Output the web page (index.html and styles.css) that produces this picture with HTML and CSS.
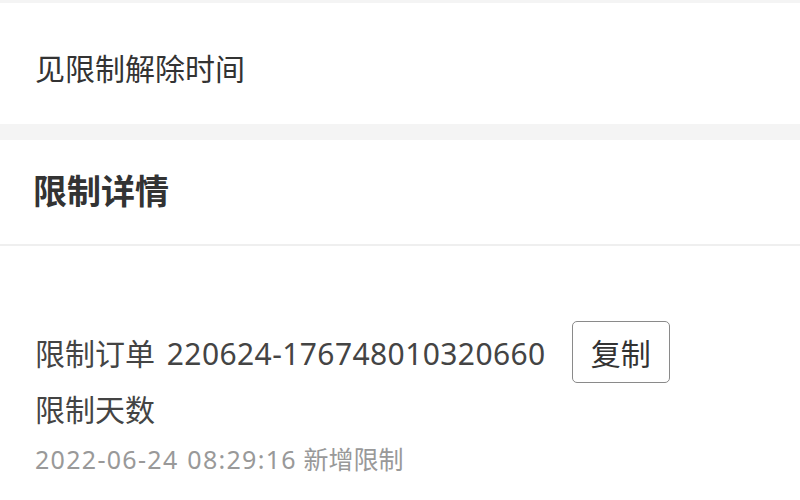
FILE: index.html
```html
<!DOCTYPE html>
<html lang="zh-CN">
<head>
    <meta charset="UTF-8">
    <meta name="viewport" content="width=device-width, initial-scale=1.0">
    <title>限制详情</title>
    <link rel="stylesheet" href="styles.css">
</head>
<body>
    <div class="card notice">
        <p>见限制解除时间</p>
    </div>

    <div class="card detail">
        <div class="detail-head">
            <h2>限制详情</h2>
        </div>
        <div class="detail-body">
            <div class="order-row">
                <span class="order-text">限制订单 <span class="num">220624-176748010320660</span></span>
                <button type="button" class="copy-btn">复制</button>
            </div>
            <p class="days">限制天数</p>
            <p class="log"><span class="time">2022-06-24 08:29:16</span> 新增限制</p>
        </div>
    </div>
</body>
</html>
```

FILE: styles.css
```css
body {
    margin: 0;
    padding-top: 3px;
    background-color: #f4f4f4;
    font-family: "Noto Sans", "Noto Sans CJK SC", sans-serif;
    color: #333;
    height: 497px;
    overflow: hidden;
}

.card {
    background-color: #fff;
}

.notice {
    height: 121px;
    display: flex;
    align-items: center;
    padding: 0 35px;
}

.notice p {
    margin: 0;
    font-size: 30px;
    line-height: 1;
    padding-top: 10px;
}

.detail {
    margin-top: 16px;
    height: 360px;
}

.detail-head {
    height: 104px;
    display: flex;
    align-items: center;
    padding: 0 33px;
    border-bottom: 2px solid #efefef;
}

.detail-head h2 {
    margin: 0;
    font-size: 34px;
    font-weight: bold;
    line-height: 1;
    color: #333;
    padding-bottom: 2px;
}

.detail-body {
    padding: 75px 35px 0;
}

.order-row {
    display: flex;
    align-items: center;
    gap: 26px;
}

.order-text {
    font-size: 30px;
    color: #444;
    word-spacing: 4px;
}

.order-text .num {
    letter-spacing: 0.4px;
}

.copy-btn {
    width: 98px;
    height: 62px;
    background: #fff;
    border: 1px solid #8a8a8a;
    border-radius: 5px;
    font-family: inherit;
    font-size: 30px;
    color: #333;
    padding: 0;
}

.days {
    margin: 6px 0 0;
    font-size: 30px;
    line-height: 42px;
    color: #444;
}

.log {
    margin: 10px 0 0;
    font-size: 25px;
    line-height: 36px;
    color: #999;
}

.log .time {
    letter-spacing: 1.3px;
    word-spacing: 1px;
}
```
